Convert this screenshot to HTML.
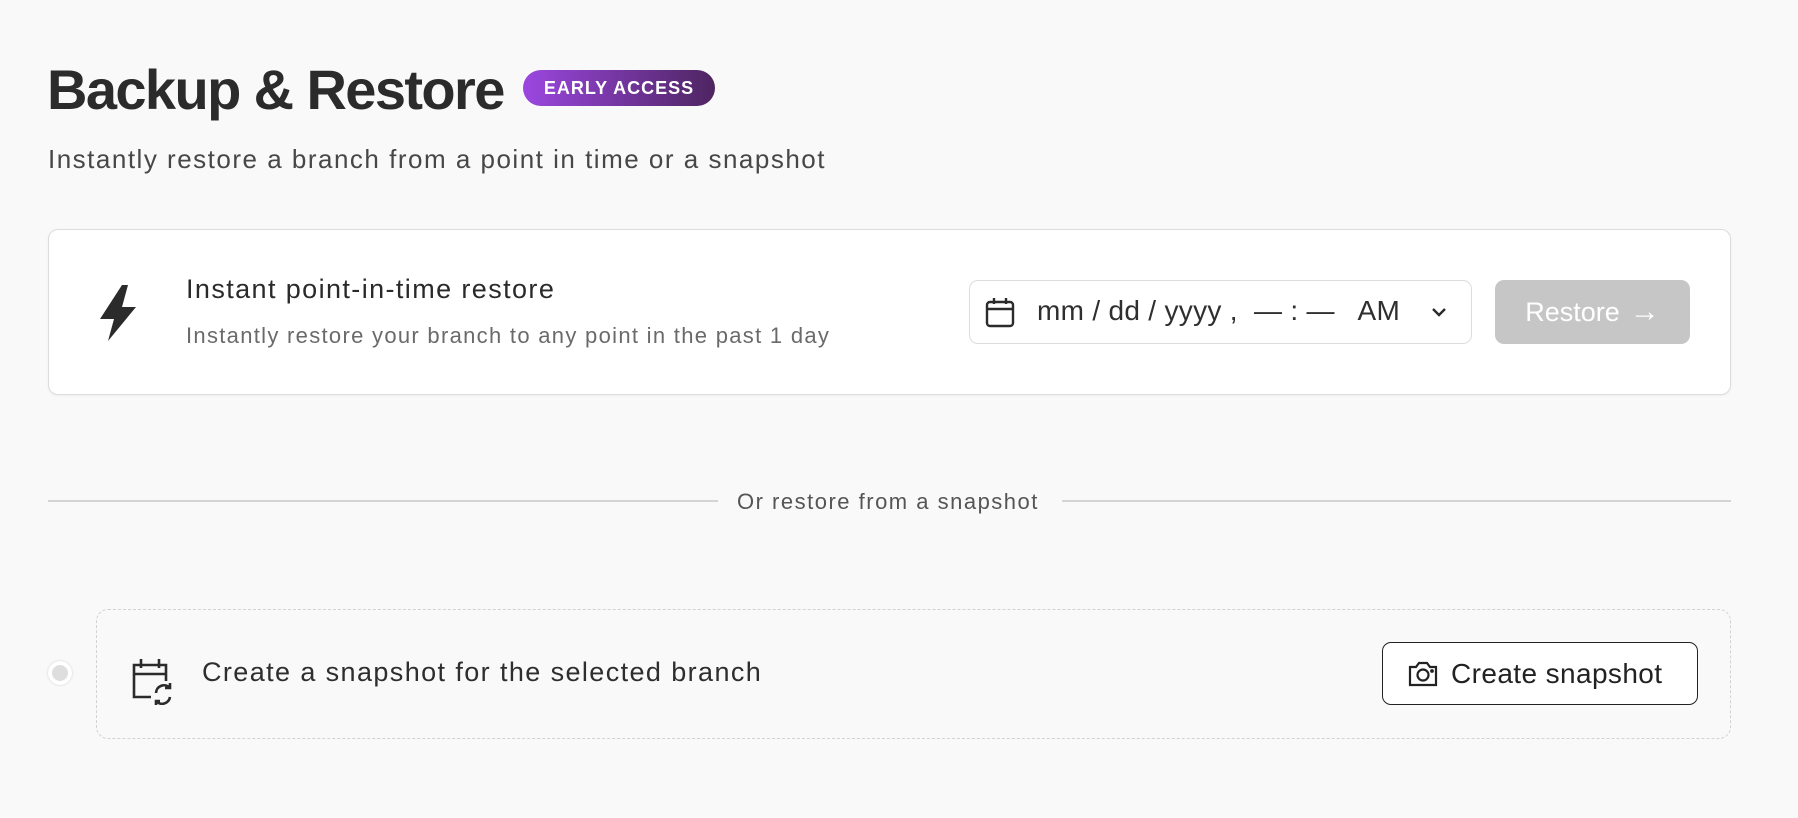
<!DOCTYPE html>
<html><head><meta charset="utf-8"><style>
*{box-sizing:border-box;margin:0;padding:0}
body{width:1798px;height:818px;background:#f9f9f9;font-family:"Liberation Sans",sans-serif;color:#2a2a2a;position:relative;overflow:hidden}
.abs{position:absolute}
h1{position:absolute;left:47px;top:57px;font-size:56px;font-weight:bold;letter-spacing:-1.6px;color:#2b2b2b;white-space:nowrap}
.badge{left:523px;top:70px;width:192px;height:36px;border-radius:18px;background:linear-gradient(90deg,#9b47e0,#4e2561);color:#fff;font-size:18px;font-weight:bold;letter-spacing:1px;display:flex;align-items:center;justify-content:center}
.sub{left:48px;top:144px;font-size:26px;letter-spacing:1.5px;color:#474747;white-space:nowrap}
.card{left:48px;top:229px;width:1683px;height:166px;background:#fff;border:1.5px solid #dcdcdc;border-radius:10px;box-shadow:0 1px 2px rgba(0,0,0,.05)}
.ct{left:186px;top:274px;font-size:27px;letter-spacing:1.4px;color:#2a2a2a;white-space:nowrap}
.cs{left:186px;top:323px;font-size:22px;letter-spacing:1.3px;color:#6a6a6a;white-space:nowrap}
.date{left:969px;top:280px;width:503px;height:64px;border:1.5px solid #dcdcdc;border-radius:9px;background:#fff}
.dt{left:1037px;top:295px;font-size:28px;letter-spacing:0.3px;color:#2f2f2f;white-space:pre}
.btn{left:1495px;top:280px;width:195px;height:64px;border-radius:9px;background:#c6c6c6;color:#fff;font-size:27px;display:flex;align-items:center;justify-content:center;gap:10px}
.line{height:1.5px;background:#d4d4d4;top:500px}
.or{left:737px;top:489px;font-size:22px;letter-spacing:1.5px;color:#555;white-space:nowrap}
.snap{left:96px;top:609px;width:1635px;height:130px;border:1.5px dashed #d2d2d2;border-radius:12px}
.dot{left:48px;top:661px;width:24px;height:24px;border-radius:50%;background:#dedede;border:4px solid #fff;box-shadow:0 0 2px rgba(0,0,0,.2)}
.st{left:202px;top:657px;font-size:27px;letter-spacing:1.4px;color:#2e2e2e;white-space:nowrap}
.cb{left:1382px;top:642px;width:316px;height:63px;border:1.5px solid #222;border-radius:9px;background:#fff;display:flex;align-items:center;padding-left:24px;gap:12px;font-size:28px;letter-spacing:0.4px;color:#222}
</style></head><body>
<h1>Backup &amp; Restore</h1>
<div class="abs badge">EARLY ACCESS</div>
<div class="abs sub">Instantly restore a branch from a point in time or a snapshot</div>
<div class="abs card"></div>
<svg class="abs" style="left:96px;top:283px" width="44" height="60" viewBox="0 0 44 60"><path d="M26 2 L4 36 H18 L12 58 L40 24 H26 L32 2 Z" fill="#2b2b2b"/></svg>
<div class="abs ct">Instant point-in-time restore</div>
<div class="abs cs">Instantly restore your branch to any point in the past 1 day</div>
<div class="abs date"></div>
<svg class="abs" style="left:984px;top:296px" width="32" height="32" viewBox="0 0 32 32" fill="none" stroke="#2b2b2b" stroke-width="2.4"><rect x="3" y="6" width="26" height="24" rx="3"/><path d="M3 13H29M10 2V8M22 2V8"/></svg>
<div class="abs dt">mm / dd / yyyy ,  — : —   AM</div>
<svg class="abs" style="left:1430px;top:305px" width="18" height="14" viewBox="0 0 18 14" fill="none" stroke="#2b2b2b" stroke-width="2.4"><path d="M3 4L9 10L15 4"/></svg>
<div class="abs btn">Restore <span style="font-size:30px">→</span></div>
<div class="abs line" style="left:48px;width:670px"></div>
<div class="abs line" style="left:1062px;width:669px"></div>
<div class="abs or">Or restore from a snapshot</div>
<div class="abs snap"></div>
<div class="abs dot"></div>
<svg class="abs" style="left:129px;top:657px" width="48" height="48" viewBox="0 0 48 48" fill="none" stroke="#2b2b2b" stroke-width="2.6"><path d="M22 40H5V8H37V24M5 17H37M12 2V11M30 2V11"/><path d="M27 36a8 8 0 0 1 14-5M41 40a8 8 0 0 1-14 4M41 26v5h-5M27 48v-4h4"/></svg>
<div class="abs st">Create a snapshot for the selected branch</div>
<div class="abs cb"><svg width="32" height="28" viewBox="0 0 32 28" fill="none" stroke="#222" stroke-width="2.2"><path d="M3 7H9L12 3H20L23 7H29V25H3Z"/><circle cx="16" cy="15" r="5.5"/><circle cx="25" cy="11" r="0.8" fill="#222"/></svg>Create snapshot</div>
</body></html>
